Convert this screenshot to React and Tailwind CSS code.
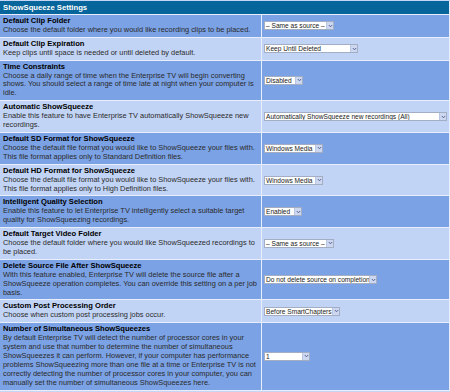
import React from "react";

const rows = [
  {
    t: "Default Clip Folder",
    d: "Choose the default folder where you would like recording clips to be placed.",
    v: "\u2013 Same as source \u2013",
    w: "w-[70px]",
  },
  {
    t: "Default Clip Expiration",
    d: "Keep clips until space is needed or until deleted by default.",
    v: "Keep Until Deleted",
    w: "w-[94px]",
  },
  {
    t: "Time Constraints",
    d: "Choose a daily range of time when the Enterprise TV will begin converting shows. You should select a range of time late at night when your computer is idle.",
    v: "Disabled",
    w: "w-[39px]",
  },
  {
    t: "Automatic ShowSqueeze",
    d: "Enable this feature to have Enterprise TV automatically ShowSqueeze new recordings.",
    v: "Automatically ShowSqueeze new recordings (All)",
    w: "w-[183px]",
  },
  {
    t: "Default SD Format for ShowSqueeze",
    d: "Choose the default file format you would like to ShowSqueeze your files with. This file format applies only to Standard Definition files.",
    v: "Windows Media",
    w: "w-[59px]",
  },
  {
    t: "Default HD Format for ShowSqueeze",
    d: "Choose the default file format you would like to ShowSqueeze your files with. This file format applies only to High Definition files.",
    v: "Windows Media",
    w: "w-[59px]",
  },
  {
    t: "Intelligent Quality Selection",
    d: "Enable this feature to let Enterprise TV intelligently select a suitable target quality for ShowSqueezing recordings.",
    v: "Enabled",
    w: "w-[38px]",
  },
  {
    t: "Default Target Video Folder",
    d: "Choose the default folder where you would like ShowSqueezed recordings to be placed.",
    v: "\u2013 Same as source \u2013",
    w: "w-[70px]",
  },
  {
    t: "Delete Source File After ShowSqueeze",
    d: "With this feature enabled, Enterprise TV will delete the source file after a ShowSqueeze operation completes. You can override this setting on a per job basis.",
    v: "Do not delete source on completion",
    w: "w-[113px]",
  },
  {
    t: "Custom Post Processing Order",
    d: "Choose when custom post processing jobs occur.",
    v: "Before SmartChapters",
    w: "w-[76px]",
  },
  {
    t: "Number of Simultaneous ShowSqueezes",
    d: "By default Enterprise TV will detect the number of processor cores in your system and use that number to determine the number of simultaneous ShowSqueezes it can perform. However, if your computer has performance problems ShowSqueezing more than one file at a time or Enterprise TV is not correctly detecting the number of processor cores in your computer, you can manually set the number of simultaneous ShowSqueezes here.",
    v: "1",
    w: "w-[46px]",
  },
];

function Select({ value, w }) {
  return (
    <div
      className={`${w} h-[9px] flex items-stretch bg-white border border-[#a3adc4] overflow-hidden`}
    >
      <div className="flex-1 min-w-0 pl-[1px] text-[6.6px] leading-[7px] text-[#222] whitespace-nowrap overflow-hidden">
        {value}
      </div>
      <div className="w-[7px] bg-[#cdd8f0] border-l border-[#b9c6e2] flex items-center justify-center">
        <svg width="5" height="4" viewBox="0 0 5 4">
          <path d="M0.8 1 L2.5 2.8 L4.2 1" fill="none" stroke="#4a5a8a" strokeWidth="0.9" />
        </svg>
      </div>
    </div>
  );
}

export default function App() {
  return (
    <div
      className="w-[450px] h-[392px] bg-[#c4d5f5] pt-px overflow-hidden"
      style={{ fontFamily: '"Liberation Sans", Arial, sans-serif' }}
    >
      <div className="bg-[#e9effa] grid grid-cols-[261px_187px] gap-px pr-px pb-px">
        <div className="col-span-2 h-[13px] bg-[#06659a] flex items-center pl-[3px] text-white font-bold text-[7.7px]">
          ShowSqueeze Settings
        </div>
        {rows.map((r, i) => {
          const bg = i % 2 === 0 ? "bg-[#7ba2e5]" : "bg-[#c2d4f5]";
          return (
            <React.Fragment key={i}>
              <div className={`${bg} px-[3px] py-[2px] text-[7.4px] leading-[8.9px]`}>
                <div className="font-bold text-black text-[7.6px]">{r.t}</div>
                <div className="text-[#2a2a2a]">{r.d}</div>
              </div>
              <div className={`${bg} pl-[2px] flex items-center`}>
                <Select value={r.v} w={r.w} />
              </div>
            </React.Fragment>
          );
        })}
      </div>
    </div>
  );
}
